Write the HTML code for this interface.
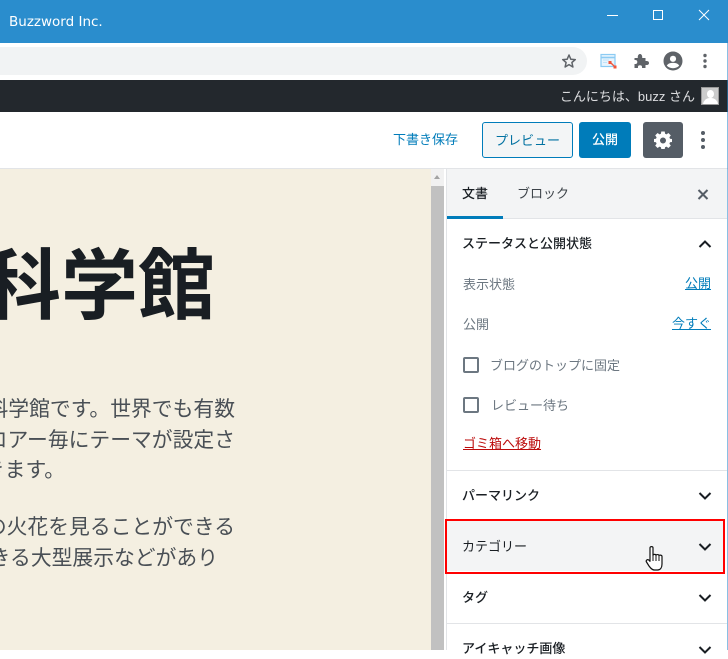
<!DOCTYPE html>
<html lang="ja"><head><meta charset="utf-8"><title>Buzzword Inc.</title>
<style>
html,body{margin:0;padding:0}
body{width:728px;height:650px;overflow:hidden;position:relative;background:#fff;font-family:"Liberation Sans","Noto Sans CJK JP",sans-serif}
.a{position:absolute;white-space:nowrap}
.b{position:absolute}
.t{font-size:13px;line-height:20px;color:#191e23;font-weight:500;left:462px}
.g{font-size:13px;line-height:20px;color:#6c7781;left:463px}
.l{font-size:13px;line-height:20px;color:#007cba;text-decoration:underline;right:17px}
.p{font-size:20.8px;line-height:31px;color:#494f55}
.c{left:463px;width:12px;height:12px;border:2px solid #6c7781;border-radius:2px}
.s{left:447px;width:280px;height:1px;background:#e2e4e7}
svg{position:absolute;display:block}
</style></head><body>
<div class="b" style="left:0;top:0;width:728px;height:43px;background:#2a8dcd"></div>
<div class="a" style="left:9px;top:12px;line-height:20px;color:#fff;font-family:'DejaVu Sans',sans-serif;font-size:13.5px">Buzzword Inc.</div>
<svg style="left:600px;top:5px" width="120" height="20" fill="none" stroke="#fff" stroke-width="1"><path d="M7 10.500H18"/><rect x="53.500" y="5.500" width="9" height="9"/><path d="M99 5L109 15M109 5L99 15"/></svg>

<div class="b" style="left:0;top:47px;width:587px;height:28px;background:#f1f3f4;border-radius:0 14px 14px 0"></div>
<svg style="left:561px;top:53px" width="16" height="16" fill="none" stroke="#5f6368" stroke-width="1.5" stroke-linejoin="round"><path d="M8 2L9.800 6.200L14.300 6.600L10.900 9.500L11.900 14L8 11.600L4.100 14L5.100 9.500L1.700 6.600L6.200 6.200Z"/></svg>
<svg style="left:600px;top:53px" width="18" height="17"><rect x="1" y="1.500" width="14" height="12" fill="#e8f4fd" stroke="#8ccbf3" stroke-width="1.200"/><path d="M1 4.500H15" stroke="#8ccbf3" stroke-width="1.600"/><path d="M3 7H9M3 9.500H7" stroke="#bfe2f8" stroke-width="1"/><path d="M10 9L15 14" stroke="#f0563c" stroke-width="1.400"/><rect x="8.500" y="8" width="3" height="3" fill="#f0563c"/><rect x="13.500" y="12.500" width="3" height="3" fill="#f0563c"/></svg>
<svg style="left:633px;top:53px" width="16" height="16" fill="#5f6368"><path d="M1.500 5H4.800C4.500 2 6 1 7 1S9.500 2 9.200 5H12.500V8C15.500 7.700 16 9 16 10S15.500 12.300 12.500 12V15H9C9.300 13 8.500 12.300 7 12.300S4.700 13 5 15H1.500V11C3.500 11.300 4.300 10.500 4.300 9S3.500 6.800 1.500 7Z"/></svg>
<svg style="left:663px;top:51px" width="20" height="20"><circle cx="10" cy="10" r="9.500" fill="#5f6368"/><circle cx="10" cy="7.800" r="3.100" fill="#fff"/><path d="M3.800 14.600C5 12.400 7.500 11.900 10 11.900S15 12.400 16.200 14.600C14.700 16.300 12.500 17.200 10 17.200S5.300 16.300 3.800 14.600Z" fill="#fff"/></svg>
<svg style="left:702px;top:53px" width="6" height="16" fill="#5f6368"><circle cx="3" cy="2.500" r="1.700"/><circle cx="3" cy="8" r="1.700"/><circle cx="3" cy="13.500" r="1.700"/></svg>

<div class="b" style="left:0;top:80px;width:728px;height:32px;background:#23282d"></div>
<div class="a" style="right:33px;top:87px;font-size:13px;line-height:20px;color:#dcdddf">こんにちは、buzz さん</div>
<div class="b" style="left:701px;top:87px;width:16px;height:16px;border:1px solid #999;background:#ccc;overflow:hidden"><div class="b" style="left:5px;top:2px;width:7px;height:8px;border-radius:50%;background:#fff"></div><div class="b" style="left:1px;top:10px;width:15px;height:10px;border-radius:7px 7px 0 0;background:#fff"></div></div>

<div class="b" style="left:0;top:168px;width:728px;height:1px;background:#e2e4e7"></div>
<div class="a" style="left:393px;top:130px;font-size:13px;line-height:20px;color:#007cba">下書き保存</div>
<div class="a" style="left:482px;top:122px;width:89px;height:34px;border:1px solid #007cba;border-radius:3px;background:#f3f5f6;color:#0071a1;font-size:13px;line-height:35px;text-align:center">プレビュー</div>
<div class="a" style="left:579px;top:122px;width:52px;height:36px;border-radius:3px;background:#007cba;color:#fff;font-size:13px;line-height:36px;text-align:center;font-weight:500">公開</div>
<div class="b" style="left:643px;top:122px;width:40px;height:36px;border-radius:3px;background:#555d66"></div>
<svg style="left:653px;top:130px" width="20" height="20" viewBox="0 0 20 20"><path fill="#fff" fill-rule="evenodd" d="M8.300 1.500H11.700L12.100 3.800L13.500 4.400L15.400 3L17.800 5.400L16.400 7.300L17 8.700L19 9V12L17 12.300L16.400 13.700L17.800 15.600L15.400 18L13.500 16.600L12.100 17.200L11.700 19H8.300L7.900 17.200L6.500 16.600L4.600 18L2.200 15.600L3.600 13.700L3 12.300L1 12V9L3 8.700L3.600 7.300L2.200 5.400L4.600 3L6.500 4.400L7.900 3.800Z M10 7.500A3 3 0 1 0 10 13.500A3 3 0 1 0 10 7.500Z"/></svg>
<svg style="left:700px;top:130px" width="6" height="20" fill="#555d66"><circle cx="3" cy="3" r="2"/><circle cx="3" cy="10" r="2"/><circle cx="3" cy="17" r="2"/></svg>

<div class="b" style="left:0;top:169px;width:431px;height:481px;background:#f4efe1;overflow:hidden">
<div class="a" style="right:216px;top:73px;font-size:77px;line-height:90px;font-weight:700;color:#191e23">科学館</div>
<div class="a p" style="right:196px;top:225px">科学館です。世界でも有数</div>
<div class="a p" style="right:196px;top:256px">フロアー毎にテーマが設定さ</div>
<div class="a p" style="right:366px;top:286px">きます。</div>
<div class="a p" style="right:196px;top:343px">の火花を見ることができる</div>
<div class="a p" style="right:213px;top:374px">きる大型展示などがあり</div>
</div>
<div class="b" style="left:431px;top:169px;width:13px;height:481px;background:#f1f1f1"></div>
<div class="b" style="left:431px;top:186px;width:13px;height:464px;background:#c1c1c1"></div>
<div class="b" style="left:434px;top:175px;width:0;height:0;border-left:3.500px solid transparent;border-right:3.500px solid transparent;border-bottom:4px solid #a3a3a3"></div>

<div class="b" style="left:446px;top:169px;width:1px;height:481px;background:#e2e4e7"></div>
<div class="b" style="left:727px;top:0;width:1px;height:650px;background:#2a8dcd;opacity:.55"></div>

<div class="b" style="left:447px;top:169px;width:280px;height:49px;background:#f3f4f5"></div>
<div class="b s" style="top:218px"></div>
<div class="b" style="left:447px;top:216px;width:56px;height:3px;background:#007cba"></div>
<div class="a t" style="top:184px;color:#191e23">文書</div>
<div class="a" style="left:517px;top:184px;font-size:13px;line-height:20px;color:#3d4349">ブロック</div>
<svg style="left:696px;top:187px" width="14" height="14" stroke="#555d66" stroke-width="2"><path d="M2.500 3L11.500 12M11.500 3L2.500 12"/></svg>

<div class="a t" style="top:234px">ステータスと公開状態</div>
<svg style="left:698px;top:239px" width="14" height="10" fill="none" stroke="#191e23" stroke-width="2"><path d="M1.500 8L7 2.500L12.500 8"/></svg>
<div class="a g" style="top:275px">表示状態</div>
<div class="a l" style="top:274px">公開</div>
<div class="a g" style="top:315px">公開</div>
<div class="a l" style="top:314px">今すぐ</div>
<div class="b c" style="top:357px"></div>
<div class="a g" style="left:490px;top:356px">ブログのトップに固定</div>
<div class="b c" style="top:397px"></div>
<div class="a g" style="left:491px;top:396px">レビュー待ち</div>
<div class="a" style="left:463px;top:434px;font-size:13px;line-height:20px;color:#bc0b0b;text-decoration:underline">ゴミ箱へ移動</div>

<div class="b s" style="top:470px"></div>
<div class="a t" style="top:486px">パーマリンク</div>
<svg style="left:698px;top:491px" width="14" height="10" fill="none" stroke="#191e23" stroke-width="2"><path d="M1.500 2L7 7.500L12.500 2"/></svg>

<div class="b" style="left:447px;top:521px;width:276px;height:50px;background:#f3f4f5"></div>
<div class="a t" style="top:537px;color:#191e23;font-weight:400">カテゴリー</div>
<svg style="left:698px;top:542px" width="14" height="10" fill="none" stroke="#191e23" stroke-width="2"><path d="M1.500 2L7 7.500L12.500 2"/></svg>
<div class="b" style="left:445px;top:519px;width:276px;height:51px;border:2px solid #ff0000"></div>

<svg style="left:645px;top:545px" width="22" height="27" viewBox="0 0 22 27"><path d="M5 2.800C5 1.200 8 1.200 8 2.800V10.500C8 9 11 9 11 10.500C11 9.200 14 9.200 14 10.800C14 9.700 17 9.900 17 11.500V19C17 22.500 15.500 25 12.500 25H9.500C7 25 5.500 23 4 21L1.500 17C.500 15.500 2.500 13.800 4 15.200L5 16.300Z" fill="#fff" stroke="#111" stroke-width="1.200" stroke-linejoin="round"/><path d="M8 10.500V16M11 10.500V16M14 10.800V16" stroke="#111" stroke-width="1" fill="none"/></svg>

<div class="a t" style="top:588px">タグ</div>
<svg style="left:698px;top:593px" width="14" height="10" fill="none" stroke="#191e23" stroke-width="2"><path d="M1.500 2L7 7.500L12.500 2"/></svg>
<div class="b s" style="top:623px"></div>
<div class="a t" style="top:639px">アイキャッチ画像</div>
<svg style="left:698px;top:645px" width="14" height="10" fill="none" stroke="#191e23" stroke-width="2"><path d="M1.500 2L7 7.500L12.500 2"/></svg>
</body></html>
